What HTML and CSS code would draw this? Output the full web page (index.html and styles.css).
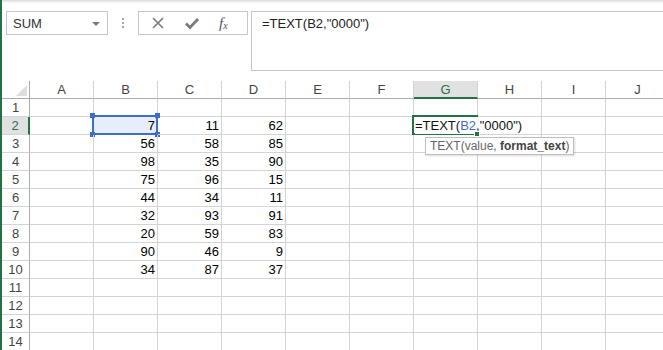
FILE: index.html
```html
<!DOCTYPE html>
<html>
<head>
<meta charset="utf-8">
<link rel="stylesheet" href="styles.css">
</head>
<body>
<div class="app">
  <div class="toolbar">
    <div class="namebox">
      <span class="name">SUM</span>
      <svg class="caret" width="8" height="4" viewBox="0 0 8 4"><polygon points="0,0 8,0 4,4" fill="#7a7a7a"/></svg>
    </div>
    <div class="grip"><i></i><i></i><i></i></div>
    <div class="buttons">
      <svg class="btn" width="14" height="14" viewBox="0 0 14 14"><path d="M2 2 L12 12 M12 2 L2 12" stroke="#7a7a7a" stroke-width="1.6" fill="none"/></svg>
      <svg class="btn" width="16" height="14" viewBox="0 0 16 14"><path d="M2 7.5 L6 11.5 L14 3" stroke="#7a7a7a" stroke-width="2.8" fill="none"/></svg>
      <span class="fx">f<sub>x</sub></span>
    </div>
    <div class="formula">=TEXT(B2,"0000")</div>
  </div>
  <div class="sheet">
    <div class="c corner"><svg width="11" height="11" viewBox="0 0 11 11"><polygon points="11,0 11,11 0,11" fill="#dedede"/></svg></div>
    <div class="c ch">A</div><div class="c ch">B</div><div class="c ch">C</div><div class="c ch">D</div><div class="c ch">E</div><div class="c ch">F</div><div class="c ch sel">G</div><div class="c ch">H</div><div class="c ch">I</div><div class="c ch">J</div>

    <div class="c rh">1</div><div class="c"></div><div class="c"></div><div class="c"></div><div class="c"></div><div class="c"></div><div class="c"></div><div class="c"></div><div class="c"></div><div class="c"></div><div class="c"></div>

    <div class="c rh rsel">2</div><div class="c"></div>
    <div class="c n ref">7<span class="refbox"><i class="h tl"></i><i class="h tr"></i><i class="h bl"></i><i class="h br"></i></span></div>
    <div class="c n">11</div><div class="c n">62</div><div class="c"></div><div class="c"></div>
    <div class="c edit"><span class="editbox"></span><span class="etext">=TEXT(<span class="blue">B2</span>,"0000")</span><i class="fill"></i><span class="tip">TEXT(value, <b>format_text</b>)</span></div>
    <div class="c"></div><div class="c"></div><div class="c"></div>

    <div class="c rh">3</div><div class="c"></div><div class="c n">56</div><div class="c n">58</div><div class="c n">85</div><div class="c"></div><div class="c"></div><div class="c"></div><div class="c"></div><div class="c"></div><div class="c"></div>
    <div class="c rh">4</div><div class="c"></div><div class="c n">98</div><div class="c n">35</div><div class="c n">90</div><div class="c"></div><div class="c"></div><div class="c"></div><div class="c"></div><div class="c"></div><div class="c"></div>
    <div class="c rh">5</div><div class="c"></div><div class="c n">75</div><div class="c n">96</div><div class="c n">15</div><div class="c"></div><div class="c"></div><div class="c"></div><div class="c"></div><div class="c"></div><div class="c"></div>
    <div class="c rh">6</div><div class="c"></div><div class="c n">44</div><div class="c n">34</div><div class="c n">11</div><div class="c"></div><div class="c"></div><div class="c"></div><div class="c"></div><div class="c"></div><div class="c"></div>
    <div class="c rh">7</div><div class="c"></div><div class="c n">32</div><div class="c n">93</div><div class="c n">91</div><div class="c"></div><div class="c"></div><div class="c"></div><div class="c"></div><div class="c"></div><div class="c"></div>
    <div class="c rh">8</div><div class="c"></div><div class="c n">20</div><div class="c n">59</div><div class="c n">83</div><div class="c"></div><div class="c"></div><div class="c"></div><div class="c"></div><div class="c"></div><div class="c"></div>
    <div class="c rh">9</div><div class="c"></div><div class="c n">90</div><div class="c n">46</div><div class="c n">9</div><div class="c"></div><div class="c"></div><div class="c"></div><div class="c"></div><div class="c"></div><div class="c"></div>
    <div class="c rh">10</div><div class="c"></div><div class="c n">34</div><div class="c n">87</div><div class="c n">37</div><div class="c"></div><div class="c"></div><div class="c"></div><div class="c"></div><div class="c"></div><div class="c"></div>
    <div class="c rh">11</div><div class="c"></div><div class="c"></div><div class="c"></div><div class="c"></div><div class="c"></div><div class="c"></div><div class="c"></div><div class="c"></div><div class="c"></div><div class="c"></div>
    <div class="c rh">12</div><div class="c"></div><div class="c"></div><div class="c"></div><div class="c"></div><div class="c"></div><div class="c"></div><div class="c"></div><div class="c"></div><div class="c"></div><div class="c"></div>
    <div class="c rh">13</div><div class="c"></div><div class="c"></div><div class="c"></div><div class="c"></div><div class="c"></div><div class="c"></div><div class="c"></div><div class="c"></div><div class="c"></div><div class="c"></div>
    <div class="c rh">14</div><div class="c"></div><div class="c"></div><div class="c"></div><div class="c"></div><div class="c"></div><div class="c"></div><div class="c"></div><div class="c"></div><div class="c"></div><div class="c"></div>
  </div>
</div>
</body>
</html>
```

FILE: styles.css
```css
* { box-sizing: border-box; }
html, body { margin: 0; padding: 0; }
body {
  width: 663px;
  height: 350px;
  overflow: hidden;
  background: #fff;
  font-family: "Liberation Sans", Arial, sans-serif;
  font-size: 13px;
  color: #000;
}
.app {
  height: 350px;
  border-left: 2px solid #217346;
  background: linear-gradient(#d9d9d9 0px, #f3f3f3 2px, #fff 4px);
  overflow: hidden;
}
.toolbar {
  display: flex;
  align-items: flex-start;
  padding: 11px 0 10px 4px;
  height: 81px;
}
.namebox {
  width: 102px;
  height: 24px;
  border: 1px solid #c6c6c6;
  background: #fff;
  display: flex;
  align-items: center;
  justify-content: space-between;
  padding: 0 7px 0 6px;
  color: #333;
  font-size: 13px;
}
.caret { margin-top: 1px; }
.grip {
  width: 30px;
  height: 24px;
  display: flex;
  flex-direction: column;
  align-items: center;
  justify-content: center;
  gap: 2px;
}
.grip i {
  display: block;
  width: 2px;
  height: 2px;
  background: #a8a8a8;
}
.buttons {
  width: 110px;
  height: 24px;
  border: 1px solid #c6c6c6;
  background: #fff;
  display: flex;
  align-items: center;
  padding-left: 12px;
}
.btn:first-child { margin-right: 19px; }
.btn:nth-child(2) { margin-right: 19px; }
.fx {
  font-family: "Liberation Serif", "Times New Roman", serif;
  font-style: italic;
  font-size: 15px;
  color: #555;
  line-height: 1;
}
.fx sub { font-size: 10px; vertical-align: -1px; }
.formula {
  margin-left: 3px;
  flex: 1;
  height: 60px;
  border: 1px solid #c6c6c6;
  border-right: none;
  background: #fff;
  padding: 4px 0 0 10px;
  color: #222;
  font-size: 13px;
  line-height: 16px;
}
.sheet {
  display: grid;
  grid-template-columns: 28px repeat(10, 64px);
  grid-template-rows: repeat(15, 18px);
}
.c {
  border-right: 1px solid #d4d4d4;
  border-bottom: 1px solid #d4d4d4;
  line-height: 17px;
  white-space: nowrap;
  position: relative;
}
.corner {
  border-right-color: #ababab;
  border-bottom-color: #ababab;
  display: flex;
  align-items: flex-end;
  justify-content: flex-end;
  padding: 0 2px 2px 0;
}
.corner svg { display: block; }
.ch {
  text-align: center;
  color: #444;
  border-bottom-color: #ababab;
}
.ch.sel {
  background: #e1e1e1;
  color: #217346;
  border-bottom: 2px solid #217346;
}
.rh {
  text-align: center;
  color: #444;
  border-right-color: #ababab;
}
.rh.rsel {
  background: #e1e1e1;
  color: #217346;
  border-right: 2px solid #217346;
}
.n { text-align: right; padding-right: 2px; }
.ref { background: #e8eef9; }
.refbox {
  position: absolute;
  left: -2px;
  top: -2px;
  right: -1px;
  bottom: -1px;
  border: 2px solid #3c6fc6;
}
.h {
  position: absolute;
  width: 5px;
  height: 5px;
  background: #3c6fc6;
}
.tl { left: -4px; top: -4px; }
.tr { right: -4px; top: -4px; }
.bl { left: -4px; bottom: -4px; }
.br { right: -4px; bottom: -4px; }
.edit { overflow: visible; z-index: 2; }
.editbox {
  position: absolute;
  left: -2px;
  top: -2px;
  right: -1px;
  bottom: -1px;
  border: 2px solid #217346;
}
.etext {
  position: absolute;
  left: 1px;
  top: 0;
  color: #111;
  background: #fff;
  padding-right: 1px;
}
.blue { color: #3c6fc6; }
.fill {
  position: absolute;
  right: -3px;
  bottom: -3px;
  width: 4px;
  height: 4px;
  background: #217346;
  border: 1px solid #fff;
  box-sizing: content-box;
}
.tip {
  position: absolute;
  left: 11px;
  top: 20px;
  height: 18px;
  padding: 0 4px;
  border: 1px solid #bebebe;
  background: #fff;
  color: #666;
  font-size: 12px;
  line-height: 16px;
  box-shadow: 1px 1px 2px rgba(0,0,0,0.15);
}
.tip b { color: #444; }
```
